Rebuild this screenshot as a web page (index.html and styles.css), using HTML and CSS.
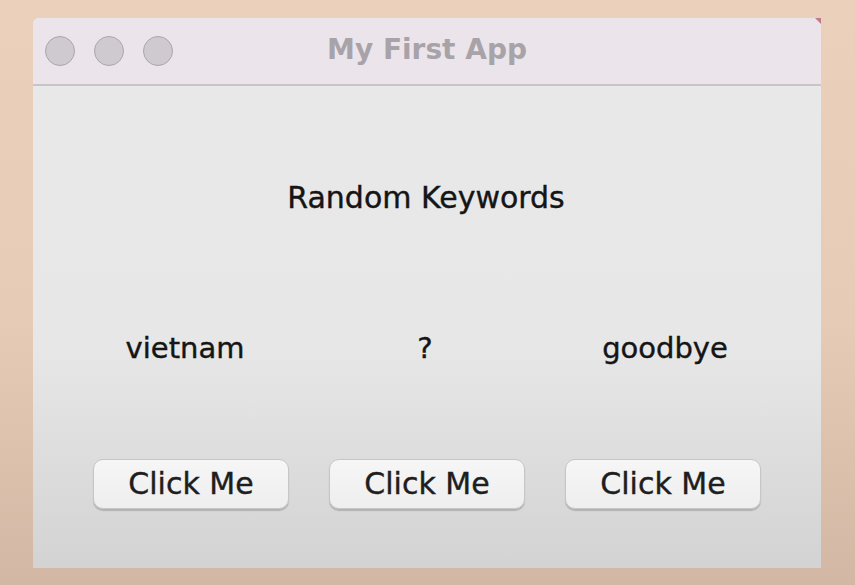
FILE: index.html
```html
<!DOCTYPE html>
<html>
<head>
<meta charset="utf-8">
<link rel="stylesheet" href="styles.css">
</head>
<body>
<div class="window">
  <div class="titlebar">
    <div class="lights">
      <span class="light"></span>
      <span class="light"></span>
      <span class="light"></span>
    </div>
    <div class="title">My First App</div>
  </div>
  <div class="content">
    <div class="heading">Random Keywords</div>
    <div class="labels">
      <div class="label">vietnam</div>
      <div class="label">?</div>
      <div class="label">goodbye</div>
    </div>
    <div class="buttons">
      <button class="btn">Click Me</button>
      <button class="btn">Click Me</button>
      <button class="btn">Click Me</button>
    </div>
  </div>
</div>
</body>
</html>
```
FILE: styles.css
```css
html, body {
  margin: 0;
  padding: 0;
}
body {
  width: 855px;
  height: 585px;
  overflow: hidden;
  background: linear-gradient(180deg, #ebd0bb 0%, #e6cbb6 55%, #d2b8a4 100%);
  font-family: "DejaVu Sans", "Liberation Sans", sans-serif;
  padding: 18px 0 0 33px;
  box-sizing: border-box;
}
.window {
  position: relative;
  width: 788px;
  height: 550px;
  display: flex;
  flex-direction: column;
  background: linear-gradient(180deg, #e9e9e9 0%, #e7e7e7 60%, #d3d3d3 100%);
  border-radius: 6px 0 0 0;
  overflow: hidden;
}
.window::after {
  content: "";
  position: absolute;
  top: 0;
  right: 0;
  border-top: 6px solid #c07a8c;
  border-left: 6px solid transparent;
}
.titlebar {
  height: 66px;
  flex: none;
  display: flex;
  align-items: center;
  position: relative;
  background: #ebe5eb;
  border-bottom: 2px solid #c8c4c8;
}
.lights {
  display: flex;
  gap: 19px;
  padding-left: 12px;
}
.light {
  width: 28px;
  height: 28px;
  border-radius: 50%;
  background: #cfcacf;
  border: 1px solid #aba6ab;
}
.title {
  position: absolute;
  left: 0;
  right: 0;
  top: 15px;
  text-align: center;
  font-weight: bold;
  font-size: 28px;
  line-height: 34px;
  color: #a8a3a8;
  padding-left: 0;
}
.content {
  display: flex;
  flex-direction: column;
  align-items: center;
  padding-top: 95px;
}
.heading {
  font-size: 30px;
  line-height: 34px;
  color: #151515;
  -webkit-text-stroke: 0.4px #151515;
  margin-right: 2px;
}
.labels {
  display: grid;
  grid-template-columns: repeat(3, 240px);
  margin-top: 116px;
  margin-right: 4px;
}
.label {
  text-align: center;
  font-size: 29px;
  line-height: 34px;
  color: #151515;
  -webkit-text-stroke: 0.4px #151515;
}
.label-wide {
  font-size: 30px;
}
.buttons {
  display: flex;
  gap: 40px;
  margin-top: 94px;
}
.btn {
  width: 196px;
  height: 50px;
  border-radius: 10px;
  border: 1px solid #c6c6c6;
  background: linear-gradient(180deg, #f6f6f6 0%, #eeeeee 100%);
  box-shadow: 0 2px 1px rgba(0, 0, 0, 0.18);
  font-family: "DejaVu Sans", "Liberation Sans", sans-serif;
  font-size: 30px;
  color: #1e1e1e;
  -webkit-text-stroke: 0.4px #1e1e1e;
  padding: 0 0 2px 0;
}
```
